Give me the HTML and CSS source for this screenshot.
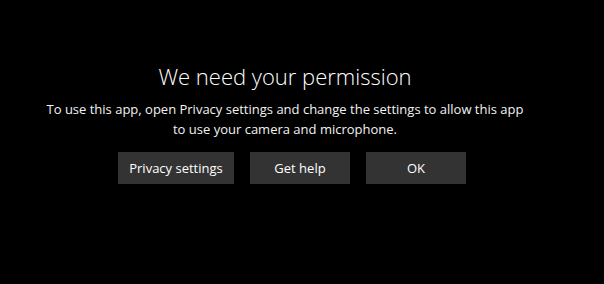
FILE: index.html
```html
<!DOCTYPE html>
<html>
<head>
<meta charset="utf-8">
<link rel="stylesheet" href="styles.css">
</head>
<body>
<div class="dialog">
  <h1 class="title">We need your permission</h1>
  <p class="message">To use this app, open Privacy settings and change the settings to allow this app<br>to use your camera and microphone.</p>
  <div class="actions">
    <button class="btn btn-wide">Privacy settings</button>
    <button class="btn">Get help</button>
    <button class="btn">OK</button>
  </div>
</div>
</body>
</html>
```
FILE: styles.css
```css
html, body {
  margin: 0;
  padding: 0;
  background: #000;
  height: 100%;
}
body {
  font-family: "Open Sans", "Noto Sans", sans-serif;
  color: #fff;
}
.dialog {
  width: 490px;
  margin-left: 40px;
  padding-top: 61px;
  display: flex;
  flex-direction: column;
  align-items: center;
  text-align: center;
}
.title {
  margin: 0;
  font-size: 22px;
  font-weight: 300;
  line-height: 30px;
}
.message {
  margin: 8px 0 0;
  font-size: 13px;
  line-height: 20px;
  color: #f2f2f2;
}
.actions {
  display: flex;
  gap: 16px;
  margin-top: 13px;
  padding-left: 14px;
}
.btn {
  width: 100px;
  height: 32px;
  border: 0;
  background: #333;
  color: #fff;
  font-family: inherit;
  font-size: 13px;
  padding: 0;
}
.btn-wide {
  width: 116px;
}
```
